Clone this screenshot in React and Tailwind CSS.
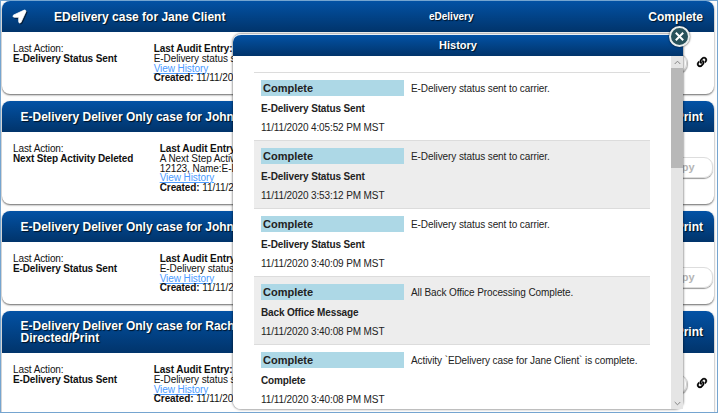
import React from "react";
import { FaLocationArrow, FaLink } from "react-icons/fa";

const shadowText = "[text-shadow:1px_1px_1px_rgba(0,0,0,0.75)]";

const cases = [
  {
    title: ["EDelivery case for Jane Client"],
    middle: "eDelivery",
    status: "Complete",
    arrow: true,
    action: "E-Delivery Status Sent",
    audit: ["E-Delivery status sent"],
    height: "h-[93px]",
    header: "h-[31px]",
    indent: "pl-[140.7px]",
    button: "link",
  },
  {
    title: ["E-Delivery Deliver Only case for John"],
    status: "Directed/Print",
    action: "Next Step Activity Deleted",
    audit: ["A Next Step Activity", "12123, Name:E-Del"],
    height: "h-[103px]",
    header: "h-[31px]",
    indent: "pl-[146.7px]",
    button: "copy",
  },
  {
    title: ["E-Delivery Deliver Only case for John"],
    status: "Directed/Print",
    action: "E-Delivery Status Sent",
    audit: ["E-Delivery status"],
    height: "h-[93px]",
    header: "h-[31px]",
    indent: "pl-[146.7px]",
    button: "copy",
  },
  {
    title: ["E-Delivery Deliver Only case for Rachel", "Directed/Print"],
    status: "Directed/Print",
    action: "E-Delivery Status Sent",
    audit: ["E-Delivery status sent"],
    height: "h-[110px]",
    header: "h-[42px]",
    indent: "pl-[140.7px]",
    button: "link",
  },
];

const history = [
  ["E-Delivery status sent to carrier.", "E-Delivery Status Sent", "11/11/2020 4:05:52 PM MST"],
  ["E-Delivery status sent to carrier.", "E-Delivery Status Sent", "11/11/2020 3:53:12 PM MST"],
  ["E-Delivery status sent to carrier.", "E-Delivery Status Sent", "11/11/2020 3:40:09 PM MST"],
  ["All Back Office Processing Complete.", "Back Office Message", "11/11/2020 3:40:08 PM MST"],
  ["Activity `EDelivery case for Jane Client` is complete.", "Complete", "11/11/2020 3:40:08 PM MST"],
];

function CaseCard({ item }) {
  return (
    <section
      className={`${item.height} w-[712px] shrink-0 overflow-hidden rounded-[8px] bg-white shadow-[0_1px_2px_rgba(0,0,0,0.6)]`}
    >
      <header
        className={`${item.header} flex items-center bg-linear-to-b from-[#0352a5] to-[#01346b] pr-[11px] font-bold text-white ${shadowText}`}
      >
        <div className={`flex w-[399px] items-center whitespace-nowrap text-[12px] leading-[12px] ${item.arrow ? "pl-[11px]" : "pl-[18.5px]"}`}>
          {item.arrow && (
            <FaLocationArrow className="mr-[28px] size-[13px] overflow-visible stroke-white stroke-[30px] drop-shadow-[1px_1px_0_rgba(0,0,0,0.6)]" />
          )}
          <div>
            {item.title.map((line) => (
              <div key={line}>{line}</div>
            ))}
          </div>
        </div>
        <span className="w-[100px] pl-[28px] text-[10px]">{item.middle}</span>
        <span className="ml-auto text-[12px]">{item.status}</span>
      </header>
      <div className="flex pl-[11px] pt-[12px] text-[10px] leading-[9.8px] text-[#111]">
        <div className="w-0 shrink-0 whitespace-nowrap">
          <div className="tracking-[-0.1px]">Last Action:</div>
          <div className="font-bold tracking-[-0.13px]">{item.action}</div>
        </div>
        <div className={`${item.indent} w-[600px] shrink-0 whitespace-nowrap tracking-[-0.08px]`}>
          <div className="font-bold">Last Audit Entry:</div>
          {item.audit.map((line) => (
            <div key={line}>{line}</div>
          ))}
          <div className="text-[#4c9bff] underline">View History</div>
          <div>
            <b>Created:</b> 11/11/2020
          </div>
        </div>
        {item.button === "link" ? (
          <div className="-ml-[10px] flex pt-[9px]">
            <div className="h-[20px] w-[84px] rounded-[9px] border border-[#d0d0d0] shadow-[1px_1px_1px_rgba(0,0,0,0.3)]" />
            <FaLink className="ml-[10px] mt-[4px] size-[10px] shrink-0 overflow-visible stroke-black stroke-[16px] text-black" />
          </div>
        ) : (
          <div className="ml-[10px] mt-[13px] flex h-[21px] w-[90px] items-center justify-end rounded-[9px] border border-[#ddd] pr-[17.5px] text-[11px] font-bold text-[#b5b5b5] shadow-[0_1px_1px_rgba(0,0,0,0.4)]">
            Copy
          </div>
        )}
      </div>
    </section>
  );
}

function Scrollbar() {
  return (
    <div className="flex w-[12px] flex-col bg-[#e5e5e5]">
      <div className="flex h-[12px] items-center justify-center">
        <svg width="7" height="5" viewBox="0 0 7 5" fill="none" stroke="#858585">
          <path d="M.7 4 3.5 1.2 6.3 4" />
        </svg>
      </div>
      <div className="h-[100px] bg-[#b8b8b8]" />
      <div className="mt-auto flex h-[12px] items-center justify-center">
        <svg width="7" height="5" viewBox="0 0 7 5" fill="none" stroke="#858585">
          <path d="M.7 1 3.5 3.8 6.3 1" />
        </svg>
      </div>
    </div>
  );
}

function HistoryDialog() {
  return (
    <div className="absolute left-[232px] top-[33px] h-[375px] w-[450px] rounded-[8px] shadow-[0_0_2px_1px_rgba(0,0,0,0.35)]">
      <div className="flex h-full flex-col overflow-hidden rounded-l-[8px] rounded-tr-[8px] border-t border-[#e8eef5] bg-white">
        <header className={`h-[21px] shrink-0 bg-linear-to-b from-[#0352a5] to-[#01346b] text-center text-[11px] font-bold leading-[21px] text-white ${shadowText}`}>
          History
        </header>
        <div className="flex min-h-0 flex-1 justify-between">
          <div className="ml-[21px] mt-[16px] w-[396px] overflow-hidden">
            {history.map(([message, action, time], i) => (
              <div
                key={i}
                className={`h-[68px] border-t border-[#dcdcdc] pl-[7px] pt-[7px] text-[10px] text-[#222] ${i % 2 ? "bg-[#ededed]" : ""}`}
              >
                <div className="flex">
                  <div className="h-[16px] w-[143px] bg-[#add8e6] pl-[2px] text-[11px] font-bold leading-[16px]">Complete</div>
                  <div className="whitespace-nowrap pl-[7px] leading-[18px] tracking-[-0.09px]">{message}</div>
                </div>
                <div className="mt-px font-bold leading-[20px] tracking-[-0.14px]">{action}</div>
                <div className="leading-[18px] tracking-[-0.12px]">{time}</div>
              </div>
            ))}
          </div>
          <Scrollbar />
        </div>
      </div>
      <button className="absolute -right-[7px] -top-[8px] flex size-[21px] items-center justify-center rounded-full border-2 border-[#e9eeee] bg-[#28525b] shadow-[0_0_2px_rgba(0,0,0,0.8)]">
        <svg width="9" height="9" viewBox="0 0 9 9" stroke="white" strokeWidth="2">
          <path d="m.8.8 7.4 7.4M8.2.8.8 8.2" />
        </svg>
      </button>
    </div>
  );
}

export default function App() {
  return (
    <main className="relative h-[413px] w-[718px] overflow-hidden border border-[#75a5d0] bg-[#fdfdfd] font-['Liberation_Sans',Arial,sans-serif]">
      <div className="flex flex-col gap-[7px] pl-px">
        {cases.map((item, i) => (
          <CaseCard key={i} item={item} />
        ))}
      </div>
      <HistoryDialog />
    </main>
  );
}
